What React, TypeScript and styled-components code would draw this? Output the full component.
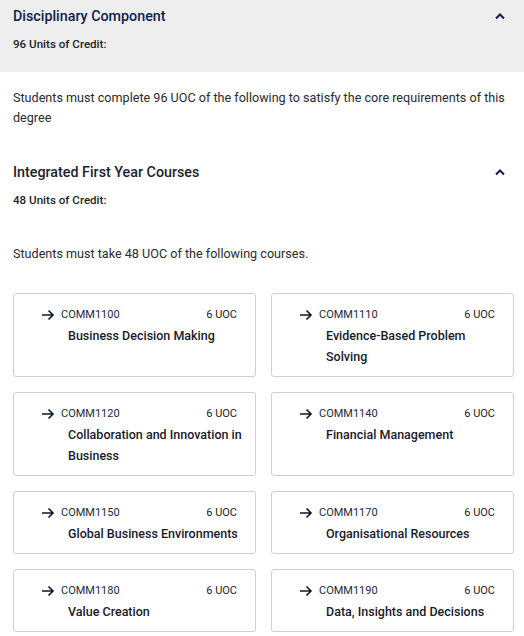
import React from 'react';
import styled, { createGlobalStyle } from 'styled-components';

const GlobalStyle = createGlobalStyle`
  body { margin: 0; background: #fff; font-family: Roboto, "Liberation Sans", Arial, sans-serif; }
`;

// === STYLED COMPONENTS ===
const Page = styled.div` width: 524px; `;
const SectionHeader = styled.div<{ $shaded?: boolean }>`
  background: ${p => (p.$shaded ? '#eeeeee' : 'transparent')};
  padding: ${p => (p.$shaded ? '6px 13px 20px 13px' : '0 13px 0 13px')};
`;
const HeaderRow = styled.div`
  display: flex; align-items: center; justify-content: space-between; height: 20px;
`;
const SectionTitle = styled.h2<{ $navy?: boolean }>`
  margin: 0; font-size: 14.3px; font-weight: 500; line-height: 20px;
  color: ${p => (p.$navy ? '#0e1f4d' : '#1e1e2a')};
`;
const Chevron = styled.svg` width: 12px; height: 12px; margin-right: 5px; `;
const Units = styled.div`
  margin-top: 10px; font-size: 11.6px; font-weight: 500; line-height: 16px; color: #1f1f1f;
`;
const Description = styled.p`
  margin: 0; padding: 0 13px; font-size: 12.6px; line-height: 20px; color: #2b2b2b;
`;
const Body = styled.div` padding-top: 16px; `;
const SubSection = styled.div` padding-top: 34px; `;
const Spacer = styled.div` height: 36px; `;
const Grid = styled.div`
  display: grid; grid-template-columns: 243px 243px; column-gap: 15px; row-gap: 15px;
  padding: 29px 10px 2px 13px;
`;
const Card = styled.div`
  border: 1px solid #d0d0d0; border-radius: 3px; background: #fff;
  padding: 13px 18px 9px 27px;
`;
const CardTop = styled.div`
  display: flex; align-items: center; height: 15px; font-size: 11px; color: #222a3a;
`;
const Arrow = styled.svg` width: 14px; height: 12px; margin-right: 6px; flex-shrink: 0; `;
const Code = styled.span` flex: 1; `;
const Uoc = styled.span` color: #222; `;
const CourseName = styled.div`
  margin: 3px -10px 0 27px; font-size: 12.5px; font-weight: 500; line-height: 21px; color: #1a1a2a;
`;

const courses = [
  { code: 'COMM1100', name: 'Business Decision Making' },
  { code: 'COMM1110', name: 'Evidence-Based Problem Solving' },
  { code: 'COMM1120', name: 'Collaboration and Innovation in Business' },
  { code: 'COMM1140', name: 'Financial Management' },
  { code: 'COMM1150', name: 'Global Business Environments' },
  { code: 'COMM1170', name: 'Organisational Resources' },
  { code: 'COMM1180', name: 'Value Creation' },
  { code: 'COMM1190', name: 'Data, Insights and Decisions' },
];

const ChevronUp = () => (
  <Chevron viewBox="0 0 12 12">
    <path d="M2 8.5 L6 4.5 L10 8.5" fill="none" stroke="#0e1f4d" strokeWidth="2" />
  </Chevron>
);

const App: React.FC = () => {
  return (
    <Page>
      <GlobalStyle />
      <SectionHeader $shaded>
        <HeaderRow>
          <SectionTitle $navy>Disciplinary Component</SectionTitle>
          <ChevronUp />
        </HeaderRow>
        <Units>96 Units of Credit:</Units>
      </SectionHeader>

      <Body>
        <Description>
          Students must complete 96 UOC of the following to satisfy the core requirements of this degree
        </Description>

        <SubSection>
          <SectionHeader>
            <HeaderRow>
              <SectionTitle>Integrated First Year Courses</SectionTitle>
              <ChevronUp />
            </HeaderRow>
            <Units>48 Units of Credit:</Units>
          </SectionHeader>
          <Spacer />
          <Description>Students must take 48 UOC of the following courses.</Description>

          <Grid>
            {courses.map(c => (
              <Card key={c.code}>
                <CardTop>
                  <Arrow viewBox="0 0 14 12">
                    <path d="M1 6 H12 M7.5 1.5 L12 6 L7.5 10.5" fill="none" stroke="#111827" strokeWidth="1.6" />
                  </Arrow>
                  <Code>{c.code}</Code>
                  <Uoc>6 UOC</Uoc>
                </CardTop>
                <CourseName>{c.name}</CourseName>
              </Card>
            ))}
          </Grid>
        </SubSection>
      </Body>
    </Page>
  );
};

export default App;
